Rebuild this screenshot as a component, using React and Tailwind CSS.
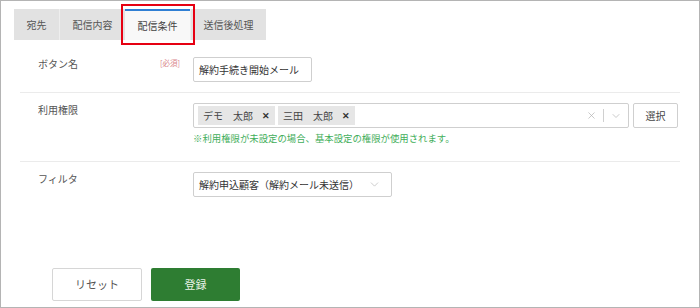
import { ChevronDown, X } from "lucide-react";

const font = { fontFamily: '"Noto Sans CJK JP", "Noto Sans", sans-serif' };

function Tab({ label, width, active }) {
    return (
        <div
            className={`flex items-center justify-center h-full text-[10px] ${
                active ? "bg-[#f8f8f8] border-t-2 border-[#2f7fd4] text-[#444]" : "bg-[#e2e2e2] text-[#555]"
            }`}
            style={{ width }}
        >
            {label}
        </div>
    );
}

function Row({ label, required, children, className }) {
    return (
        <div className={`flex border-b border-[#ebebeb] ${className}`}>
            <div className="w-[173px] pl-[18px] pr-[13px] flex justify-between items-start">
                <span className="text-[10px] leading-[14px] text-[#555]">{label}</span>
                {required && <span className="text-[7.5px] leading-[12px] text-[#d9868a]">[必須]</span>}
            </div>
            <div className="flex-1">{children}</div>
        </div>
    );
}

function Chip({ name }) {
    return (
        <div className="flex items-center h-[19px] px-[5px] bg-[#e6e6e6] text-[10px] text-[#444] gap-[9px]">
            <span className="whitespace-pre">{name}</span>
            <span className="text-[9px] font-bold text-[#333]">✕</span>
        </div>
    );
}

export default function App() {
    return (
        <div className="w-[700px] h-[308px] border border-[#b4b4b4] bg-white relative flex flex-col" style={font}>
            {/* tabs */}
            <div className="flex ml-[13px] mt-[8px] h-[31px]">
                <Tab label="宛先" width={45} />
                <div className="w-px bg-[#eeeeee]" />
                <Tab label="配信内容" width={65} />
                <Tab label="配信条件" width={65} active />
                <div className="w-px bg-[#eeeeee]" />
                <Tab label="送信後処理" width={75} />
            </div>
            <div className="absolute left-[120px] top-[3px] w-[74px] h-[41px] border-2 border-[#e60012]" />

            {/* form */}
            <div className="mx-[19px]">
                <Row label="ボタン名" required className="pt-[17px] pb-[10px]">
                    <div className="w-[119px] h-[25px] border border-[#cfcfcf] rounded-[2px] flex items-center px-[5px] text-[10px] text-[#333]">
                        解約手続き開始メール
                    </div>
                </Row>
                <Row label="利用権限" className="pt-[10px] pb-[16px]">
                    <div className="flex items-center gap-[4px]">
                        <div className="w-[436px] h-[25px] border border-[#cfcfcf] rounded-[2px] flex items-center pl-[4px] pr-[6px]">
                            <div className="flex gap-[3px] flex-1">
                                <Chip name="デモ　太郎" />
                                <Chip name="三田　太郎" />
                            </div>
                            <X size={11} strokeWidth={1.5} className="text-[#b0b0b0]" />
                            <div className="w-px h-[13px] bg-[#d0d0d0] mx-[6px]" />
                            <ChevronDown size={12} strokeWidth={1.5} className="text-[#b8b8b8]" />
                        </div>
                        <div className="w-[45px] h-[25px] border border-[#cfcfcf] rounded-[2px] flex items-center justify-center text-[10px] text-[#444]">
                            選択
                        </div>
                    </div>
                    <div className="mt-[3px] text-[9.4px] leading-[14px] text-[#3fae5a]">
                        ※利用権限が未設定の場合、基本設定の権限が使用されます。
                    </div>
                </Row>
                <div className="flex items-start pt-[10px]">
                    <div className="w-[173px] pl-[18px] text-[10px] leading-[14px] text-[#555]">
                        フィルタ
                    </div>
                    <div className="w-[199px] h-[25px] border border-[#cfcfcf] rounded-[2px] flex items-center pl-[5px] pr-[10px] justify-between">
                        <span className="text-[10px] text-[#333]">解約申込顧客（解約メール未送信）</span>
                        <ChevronDown size={13} strokeWidth={1.3} className="text-[#b8b8b8]" />
                    </div>
                </div>
            </div>

            {/* buttons */}
            <div className="flex gap-[9px] ml-[51px] mt-auto mb-[6px]">
                <button className="w-[90px] h-[33px] border border-[#d6d6d6] rounded-[2px] bg-white text-[11px] text-[#555]">
                    リセット
                </button>
                <button className="w-[89px] h-[33px] rounded-[2px] bg-[#2e7d32] text-[11px] text-[#e8f3e8]">
                    登録
                </button>
            </div>
        </div>
    );
}
